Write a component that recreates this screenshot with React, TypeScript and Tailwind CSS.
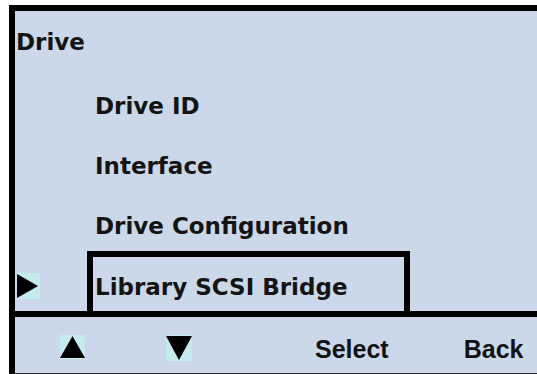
const menuFont = "font-['DejaVu_Sans',sans-serif] font-bold text-[23px] leading-[28px] text-[#141414]"
const keyFont = "font-['Liberation_Sans',Arial,sans-serif] font-bold text-[25px] leading-[30px] text-[#111]"

function Tri({ dir, w, h }: { dir: 'up' | 'down' | 'right'; w: number; h: number }) {
  const pts =
    dir === 'right'
      ? `0,1 ${w - 2},${h / 2} 0,${h - 1}`
      : dir === 'up'
        ? `${w / 2},1 ${w},${h - 1} 0,${h - 1}`
        : `0,1 ${w},1 ${w / 2},${h - 1}`
  return (
    <svg width={w} height={h} className="block bg-[#c6ebef]">
      <polygon points={pts} fill="#000" />
    </svg>
  )
}

const items = ['Drive ID', 'Interface', 'Drive Configuration']

export default function App() {
  return (
    <div className="w-[537px] h-[374px] bg-white pl-[9px] pt-[5px]">
      <div className="flex flex-col h-[369px] bg-[#cbd8ea] border-l-[6px] border-t-[6px] border-black border-b border-b-[#2a2a2a]">
        <div className="h-[300px] flex flex-col">
          <div className="h-[60px] pt-[17px] pl-[1px]">
            <span className={menuFont}>Drive</span>
          </div>
          {items.map((it) => (
            <div key={it} className="h-[60px] pt-[21px] pl-[80px]">
              <span className={menuFont}>{it}</span>
            </div>
          ))}
          <div className="h-[60px] flex items-start">
            <div className="ml-[2px] mt-[22px]">
              <Tri dir="right" w={23} h={26} />
            </div>
            <div className="ml-[47px] w-[323px] h-[60px] border-t-[6px] border-l-[6px] border-r-[6px] border-black pt-[16px] pl-[2px]">
              <span className={menuFont}>Library SCSI Bridge</span>
            </div>
          </div>
        </div>
        <div className="h-[6px] bg-black" />
        <div className="flex-1 flex items-start">
          <div className="ml-[45px] mt-[18px]">
            <Tri dir="up" w={25} h={24} />
          </div>
          <div className="ml-[81px] mt-[18px]">
            <Tri dir="down" w={26} h={26} />
          </div>
          <span className={`${keyFont} ml-[123px] mt-[17px]`}>Select</span>
          <span className={`${keyFont} ml-[75px] mt-[17px]`}>Back</span>
        </div>
      </div>
    </div>
  )
}
